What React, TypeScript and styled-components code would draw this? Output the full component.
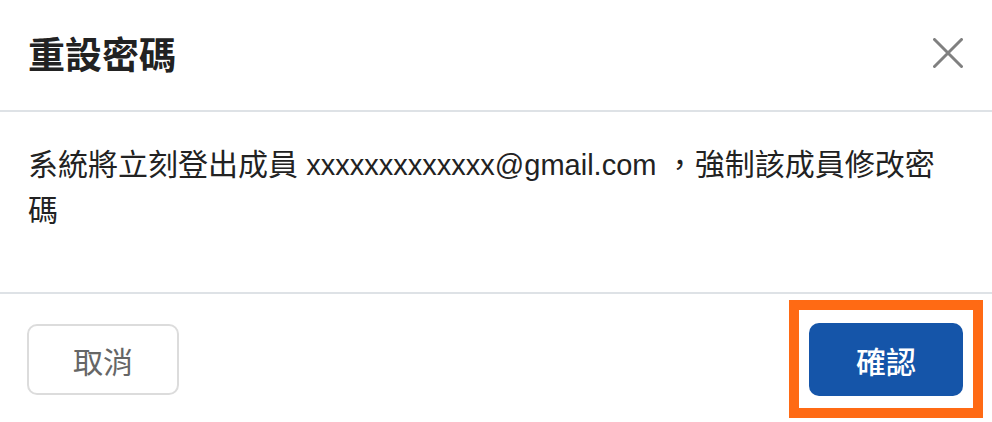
import React from "react";
import styled, { createGlobalStyle } from "styled-components";

const GlobalStyle = createGlobalStyle`
  html, body {
    margin: 0;
    padding: 0;
    background: #ffffff;
  }
  body {
    font-family: "Liberation Sans", "Noto Sans CJK TC", sans-serif;
    -webkit-font-smoothing: antialiased;
  }
  * { box-sizing: border-box; }
`;

const Dialog = styled.div`
  width: 992px;
  height: 422px;
  background: #ffffff;
  display: flex;
  flex-direction: column;
  overflow: hidden;
`;

const Header = styled.div`
  height: 112px;
  padding: 0 29px 4px 28px;
  display: flex;
  align-items: center;
  justify-content: space-between;
  border-bottom: 2px solid #dee2e6;
`;

const Title = styled.h2`
  margin: 0;
  font-family: "Noto Sans CJK TC", sans-serif;
  font-size: 37px;
  font-weight: 700;
  color: #222222;
  letter-spacing: 0;
`;

const CloseButton = styled.button`
  width: 30px;
  height: 30px;
  padding: 0;
  border: none;
  background: transparent;
  display: flex;
  align-items: center;
  justify-content: center;
  cursor: pointer;
`;

const Body = styled.div`
  height: 182px;
  padding: 30px 28px 0 28px;
  border-bottom: 2px solid #dee2e6;
`;

const Message = styled.p`
  margin: 0;
  font-size: 30px;
  line-height: 45px;
  color: #222222;
`;

const Email = styled.span`
  font-size: 29px;
`;

const Footer = styled.div`
  flex: 1;
  padding: 30px 29px 0 27px;
  display: flex;
  align-items: flex-start;
  justify-content: space-between;
`;

const Button = styled.button<{ $primary?: boolean }>`
  width: ${(p) => (p.$primary ? "154px" : "152px")};
  height: ${(p) => (p.$primary ? "73px" : "71px")};
  border-radius: 10px;
  font-family: "Noto Sans CJK TC", sans-serif;
  font-size: 30px;
  font-weight: ${(p) => (p.$primary ? 500 : 400)};
  display: flex;
  align-items: center;
  justify-content: center;
  cursor: pointer;
  border: ${(p) => (p.$primary ? "none" : "2px solid #dcdcdc")};
  background: ${(p) => (p.$primary ? "#1555a9" : "#ffffff")};
  color: ${(p) => (p.$primary ? "#ffffff" : "#666666")};
`;

const Highlight = styled.div`
  position: relative;
  margin-top: -1px;
  &::after {
    content: "";
    position: absolute;
    top: -23px;
    bottom: -22px;
    left: -20px;
    right: -20px;
    border: 10px solid #ff6a14;
    pointer-events: none;
  }
`;

export default function App() {
  return (
    <>
      <GlobalStyle />
      <Dialog>
        <Header>
          <Title>重設密碼</Title>
          <CloseButton aria-label="close">
            <svg width="30" height="30" viewBox="0 0 30 30">
              <path
                d="M1.5 1.5 L28.5 28.5 M28.5 1.5 L1.5 28.5"
                stroke="#808080"
                strokeWidth="3"
                strokeLinecap="round"
              />
            </svg>
          </CloseButton>
        </Header>
        <Body>
          <Message>
            系統將立刻登出成員 <Email>xxxxxxxxxxxxx@gmail.com</Email> ，強制該成員修改密碼
          </Message>
        </Body>
        <Footer>
          <Button>取消</Button>
          <Highlight>
            <Button $primary>確認</Button>
          </Highlight>
        </Footer>
      </Dialog>
    </>
  );
}
